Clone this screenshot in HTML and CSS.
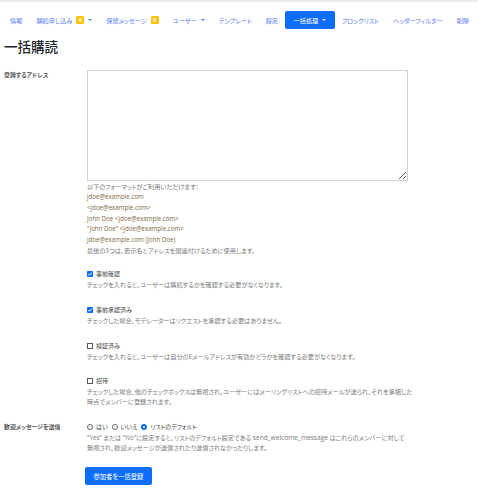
FILE: index.html
```html
<!DOCTYPE html>
<html lang="ja">
<head>
<meta charset="utf-8">
<title>一括購読</title>
<link rel="stylesheet" href="styles.css">
</head>
<body>
<div class="topbar"></div>
<nav class="nav">
  <a class="nav-link" href="#">情報</a>
  <a class="nav-link" href="#">購読申し込み<span class="badge">0</span><span class="caret"></span></a>
  <a class="nav-link" href="#">保留メッセージ<span class="badge">0</span></a>
  <a class="nav-link" href="#">ユーザー<span class="caret"></span></a>
  <a class="nav-link" href="#">テンプレート</a>
  <a class="nav-link" href="#">設定</a>
  <a class="nav-link active" href="#">一括処理<span class="caret"></span></a>
  <a class="nav-link" href="#">ブロックリスト</a>
  <a class="nav-link" href="#">ヘッダーフィルター</a>
  <a class="nav-link" href="#">削除</a>
</nav>
<main class="page">
  <h1 class="title">一括購読</h1>
  <form class="form">
    <div class="row">
      <label class="label">登録するアドレス</label>
      <div class="field">
        <textarea class="textarea"></textarea>
        <div class="help">
          <div>以下のフォーマットがご利用いただけます：</div>
          <div class="fmt">jdoe@example.com</div>
          <div class="fmt">&lt;jdoe@example.com&gt;</div>
          <div class="fmt">John Doe &lt;jdoe@example.com&gt;</div>
          <div class="fmt">"John Doe" &lt;jdoe@example.com&gt;</div>
          <div class="fmt">jdoe@example.com (John Doe)</div>
          <div>最後の3つは、表示名とアドレスを関連付けるために使用します。</div>
        </div>
      </div>
    </div>

    <div class="row checks">
      <div class="label"></div>
      <div class="field">
        <div class="check">
          <div class="check-label"><span class="box checked"><svg viewBox="0 0 6 6" width="6" height="6"><path d="M1.3 3.1 L2.5 4.3 L4.8 1.6" fill="none" stroke="#fff" stroke-width="1"/></svg></span>事前確認</div>
          <div class="desc">チェックを入れると、ユーザーは購読するかを確認する必要がなくなります。</div>
        </div>
        <div class="check">
          <div class="check-label"><span class="box checked"><svg viewBox="0 0 6 6" width="6" height="6"><path d="M1.3 3.1 L2.5 4.3 L4.8 1.6" fill="none" stroke="#fff" stroke-width="1"/></svg></span>事前承認済み</div>
          <div class="desc">チェックした場合、モデレーターはリクエストを承認する必要はありません。</div>
        </div>
        <div class="check">
          <div class="check-label"><span class="box"></span>検証済み</div>
          <div class="desc">チェックを入れると、ユーザーは自分のEメールアドレスが有効かどうかを確認する必要がなくなります。</div>
        </div>
        <div class="check">
          <div class="check-label"><span class="box"></span>招待</div>
          <div class="desc">チェックした場合、他のチェックボックスは無視され、ユーザーにはメーリングリストへの招待メールが送られ、それを承諾した<br>時点でメンバーに登録されます。</div>
        </div>
      </div>
    </div>

    <div class="row">
      <label class="label">歓迎メッセージを送信</label>
      <div class="field">
        <div class="radios">
          <span class="radio"></span><span class="rtext">はい</span>
          <span class="radio"></span><span class="rtext">いいえ</span>
          <span class="radio on"></span><span class="rtext">リストのデフォルト</span>
        </div>
        <div class="desc">"Yes" または "No"に設定すると、リストのデフォルト設定である <span class="latin">send_welcome_message</span> はこれらのメンバーに対して<br>無視され、歓迎メッセージが送信されたり送信されなかったりします。</div>
      </div>
    </div>

    <div class="actions">
      <button class="btn" type="button">参加者を一括登録</button>
    </div>
  </form>
</main>
</body>
</html>
```
FILE: styles.css
```css
html, body {
  margin: 0;
  padding: 0;
  background: #fff;
}
body {
  font-family: "Open Sans", "Noto Sans CJK JP", sans-serif;
  font-feature-settings: "palt";
  color: #212529;
}
.topbar {
  height: 2px;
  background: #eceef0;
}
.nav {
  display: flex;
  align-items: center;
  height: 18px;
  margin: 9px 0 0 3px;
}
.nav-link {
  display: flex;
  align-items: center;
  height: 18px;
  padding: 0 7px;
  font-size: 6.2px;
  color: #5a7cf5;
  text-decoration: none;
  white-space: nowrap;
}
.nav-link.active {
  padding: 0 8.5px;
  background: #0d6efd;
  color: #fff;
  border-radius: 2px;
}
.badge {
  display: inline-block;
  background: #ffc107;
  color: #fff;
  font-size: 5px;
  font-weight: bold;
  line-height: 8px;
  padding: 0 2.5px;
  border-radius: 1.5px;
  margin-left: 4px;
}
.caret {
  display: inline-block;
  width: 0;
  height: 0;
  border-top: 2.5px solid currentColor;
  border-left: 2.2px solid transparent;
  border-right: 2.2px solid transparent;
  margin-left: 4px;
}
.page {
  padding: 0 0 0 4px;
}
.title {
  margin: 10px 0 0 0;
  font-size: 13.5px;
  line-height: 17px;
  font-weight: 500;
}
.form {
  margin-top: 14px;
}
.row {
  display: flex;
}
.label {
  flex: none;
  width: 83px;
  font-size: 5.9px;
  font-weight: bold;
  line-height: 10px;
  color: #555;
}
.field {
  flex: 1;
}
.textarea {
  display: block;
  width: 321px;
  height: 111px;
  box-sizing: border-box;
  margin: 0;
  border: 1px solid #d0d3d7;
  border-radius: 0;
  resize: both;
}
.help {
  padding-top: 0.5px;
  font-size: 6.2px;
  line-height: 10.7px;
  color: #7a7a7a;
}
.fmt {
  color: #7d6843;
}
.checks {
  margin-top: 13px;
}
.check {
  margin-bottom: 14.7px;
}
.check-label {
  display: flex;
  align-items: center;
  gap: 3px;
  font-size: 6px;
  line-height: 10px;
  color: #444;
}
.box {
  display: inline-block;
  width: 6px;
  height: 6px;
  box-sizing: border-box;
  border: 0.8px solid #555;
  background: #fff;
}
.box.checked {
  border: none;
  background: #0d6efd;
  border-radius: 0.8px;
}
.box svg {
  display: block;
}
.desc {
  margin-top: 1px;
  font-size: 6.2px;
  line-height: 10px;
  color: #7a7a7a;
}
.latin {
  font-size: 6.6px;
}
.radios {
  display: flex;
  align-items: center;
  font-size: 6px;
  line-height: 10px;
  color: #444;
}
.radio {
  display: inline-block;
  width: 6px;
  height: 6px;
  box-sizing: border-box;
  border: 0.8px solid #666;
  border-radius: 50%;
  margin-right: 3px;
}
.radio.on {
  border: none;
  background: #fff;
  box-shadow: inset 0 0 0 2px #0d6efd;
}
.rtext {
  margin-right: 4px;
}
.actions {
  margin-top: 14px;
  padding-left: 81px;
}
.btn {
  display: block;
  height: 18px;
  padding: 0 8.5px;
  border: none;
  border-radius: 2px;
  background: #0d6efd;
  color: #fff;
  font-family: inherit;
  font-feature-settings: "palt";
  font-size: 6.3px;
}
```
